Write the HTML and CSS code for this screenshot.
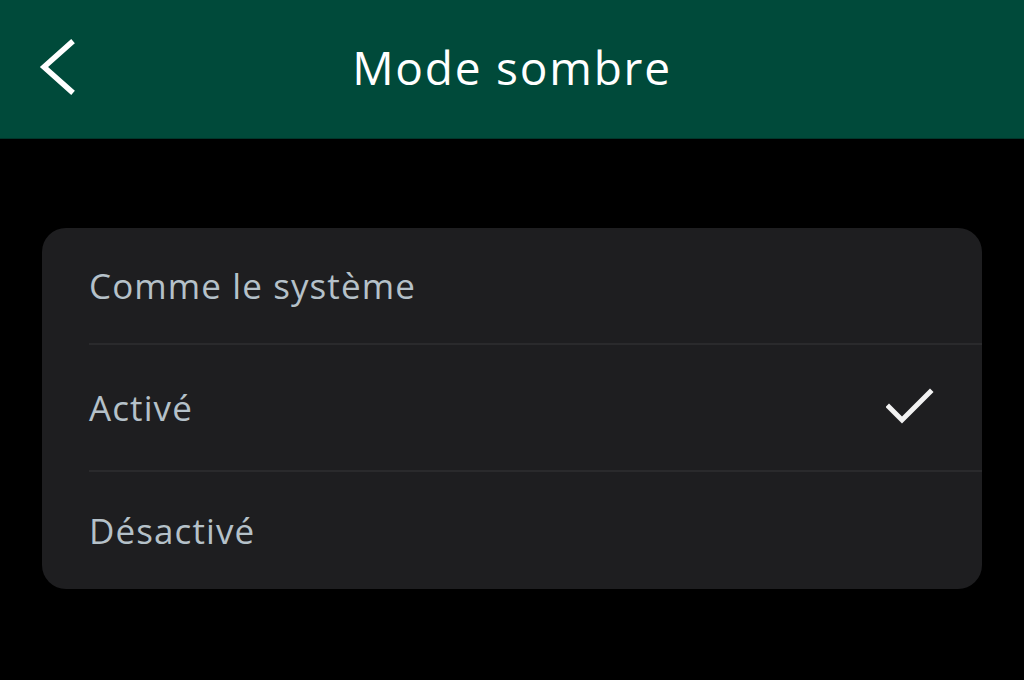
FILE: index.html
```html
<!DOCTYPE html>
<html lang="fr">
<head>
<meta charset="utf-8">
<link rel="stylesheet" href="styles.css">
</head>
<body>
<header class="topbar">
  <button class="back" aria-label="Retour">
    <svg width="40" height="60" viewBox="0 0 40 60"><polyline points="34,5 7,29 34,53" fill="none" stroke="#fff" stroke-width="5.5" stroke-linecap="square"/></svg>
  </button>
  <h1 class="title">Mode sombre</h1>
</header>
<main class="content">
  <ul class="card">
    <li class="row row-first">Comme le système</li>
    <li class="row row-mid">Activé
      <svg class="check" width="50" height="40" viewBox="0 0 50 40"><polyline points="3,19 16,32 44,4" fill="none" stroke="#f2f2f2" stroke-width="5" stroke-linecap="square"/></svg>
    </li>
    <li class="row row-last">Désactivé</li>
  </ul>
</main>
</body>
</html>
```
FILE: styles.css
```css
* { box-sizing: border-box; }
html, body { margin: 0; padding: 0; }
body {
  width: 1024px;
  height: 680px;
  background: #000;
  font-family: "Open Sans", Roboto, sans-serif;
  overflow: hidden;
}
.topbar {
  height: 139px;
  background: #004a3a;
  display: flex;
  align-items: center;
  justify-content: center;
  position: relative;
  border-bottom: 1px solid #00362a;
}
.back {
  position: absolute;
  left: 37px;
  top: 38px;
  padding: 0;
  background: none;
  border: 0;
  display: flex;
}
.title {
  margin: 0;
  color: #fff;
  font-weight: 400;
  font-size: 46px;
  letter-spacing: 1.8px;
  transform: translateY(-2px);
}
.content {
  padding: 89px 42px 0 42px;
}
.card {
  list-style: none;
  margin: 0;
  padding: 0;
  background: #1e1e20;
  border-radius: 24px;
  overflow: hidden;
}
.row {
  display: flex;
  align-items: center;
  justify-content: space-between;
  margin-left: 47px;
  padding-right: 48px;
  color: #b5c1c9;
  font-size: 35px;
  letter-spacing: 1.1px;
}
.row-first { height: 117px; border-bottom: 2px solid #2a2a2c; }
.row-mid { height: 127px; border-bottom: 2px solid #2a2a2c; }
.row-last { height: 117px; }
.check { margin-right: -2px; }
```
